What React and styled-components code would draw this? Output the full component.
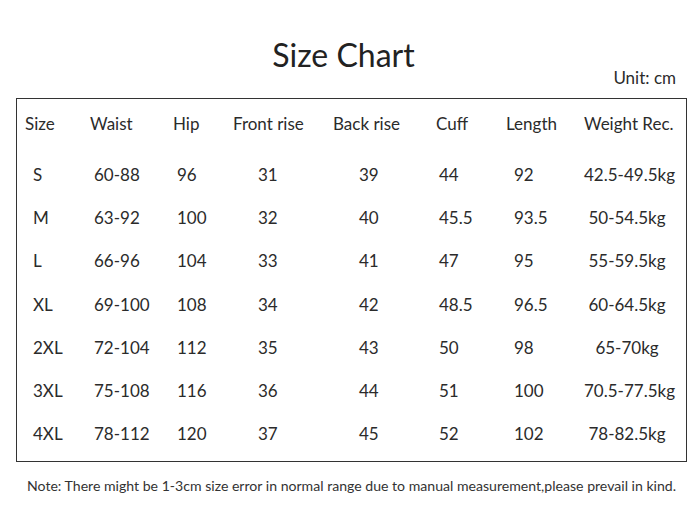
import React from 'react'
import styled, { createGlobalStyle } from 'styled-components'

const GlobalStyle = createGlobalStyle`
  html, body {
    margin: 0;
    padding: 0;
    background: #fff;
  }
  body {
    font-family: Lato, "Open Sans", "Liberation Sans", sans-serif;
    color: #2b2b2b;
  }
`

const Page = styled.div`
  width: 700px;
  height: 512px;
  box-sizing: border-box;
  padding: 35px 0 0 16px;
  display: flex;
  flex-direction: column;
`

const Title = styled.h1`
  margin: 0;
  width: 655px;
  font-weight: 400;
  font-size: 32px;
  line-height: 40px;
  text-align: center;
  color: #222;
`

const Unit = styled.div`
  width: 660px;
  margin-top: -7px;
  font-size: 17px;
  line-height: 20px;
  text-align: right;
`

const Table = styled.div`
  margin-top: 10px;
  width: 671px;
  box-sizing: border-box;
  border: 1px solid #333;
  padding-bottom: 6px;
`

const Row = styled.div`
  display: grid;
  grid-template-columns: 8px 65px 83px 60px 100px 103px 70px 78px 1fr;
  align-items: center;
  height: ${p => (p.$head ? '48px' : '43.2px')};
  margin-bottom: ${p => (p.$head ? '6px' : '0')};
  font-size: 17px;
`

const Cell = styled.div`
  grid-column: ${p => p.$col + 2};
  padding-left: ${p => p.$indent || 0}px;
  padding-right: ${p => p.$pr || 0}px;
  text-align: ${p => (p.$center ? 'center' : 'left')};
  white-space: nowrap;
`

const Note = styled.p`
  margin: 15px 0 0 11px;
  font-size: 14.1px;
  line-height: 18px;
  color: #333;
`

const headers = ['Size', 'Waist', 'Hip', 'Front rise', 'Back rise', 'Cuff', 'Length', 'Weight Rec.']

const rows = [
  ['S', '60-88', '96', '31', '39', '44', '92', '42.5-49.5kg'],
  ['M', '63-92', '100', '32', '40', '45.5', '93.5', '50-54.5kg'],
  ['L', '66-96', '104', '33', '41', '47', '95', '55-59.5kg'],
  ['XL', '69-100', '108', '34', '42', '48.5', '96.5', '60-64.5kg'],
  ['2XL', '72-104', '112', '35', '43', '50', '98', '65-70kg'],
  ['3XL', '75-108', '116', '36', '44', '51', '100', '70.5-77.5kg'],
  ['4XL', '78-112', '120', '37', '45', '52', '102', '78-82.5kg'],
]

// left indent of data under each header
const indents = [8, 4, 4, 25, 26, 3, 8, 0]

export default function App() {
  return (
    <>
      <GlobalStyle />
      <Page>
        <Title>Size Chart</Title>
        <Unit>Unit: cm</Unit>
        <Table>
          <Row $head>
            {headers.map((h, i) => (
              <Cell key={h} $col={i}>{h}</Cell>
            ))}
          </Row>
          {rows.map(r => (
            <Row key={r[0]}>
              {r.map((v, i) =>
                i === 7 ? (
                  <Cell key={i} $col={i} $center $pr={16}>{v}</Cell>
                ) : (
                  <Cell key={i} $col={i} $indent={indents[i]}>{v}</Cell>
                )
              )}
            </Row>
          ))}
        </Table>
        <Note>
          Note: There might be 1-3cm size error in normal range due to manual measurement,please prevail in kind.
        </Note>
      </Page>
    </>
  )
}
